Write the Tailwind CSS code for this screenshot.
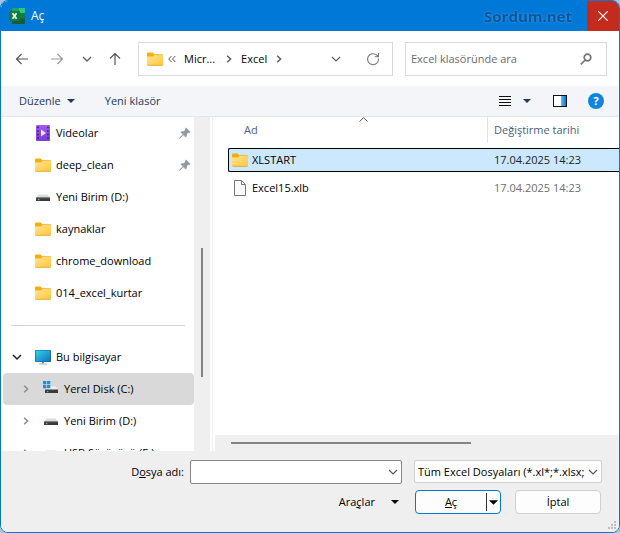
<!DOCTYPE html>
<html lang="tr">
<head>
    <meta charset="UTF-8">
    <meta name="viewport" content="width=device-width, initial-scale=1.0">
    <title>Aç</title>
    <script src="https://cdn.jsdelivr.net/npm/@tailwindcss/browser@4"></script>
</head>
<body class="bg-[#a9c6df] font-['Open_Sans','Noto_Sans',sans-serif] text-[11px] leading-4 text-black">

<!-- shared icons -->
<svg class="absolute size-0">
    <defs>
        <linearGradient id="folder-fill" x1="0" y1="0" x2="1" y2="1">
            <stop offset="0" stop-color="#ffe395"/>
            <stop offset="1" stop-color="#ffc83c"/>
        </linearGradient>
        <linearGradient id="video-fill" x1="0" y1="0" x2="0" y2="1">
            <stop offset="0" stop-color="#a35bea"/>
            <stop offset="1" stop-color="#7a3ad6"/>
        </linearGradient>
        <linearGradient id="screen-fill" x1="0" y1="0" x2="1" y2="1">
            <stop offset="0" stop-color="#35d5e0"/>
            <stop offset="1" stop-color="#1170c4"/>
        </linearGradient>
        <linearGradient id="pane-fill" x1="0" y1="0" x2="1" y2="0">
            <stop offset="0" stop-color="#5cc0f5"/>
            <stop offset="1" stop-color="#0b78d0"/>
        </linearGradient>
    </defs>
    <symbol id="icon-folder" viewBox="0 0 16 16">
        <path d="M0 2.5Q0 1.5 1 1.5H5.5L7.5 3.2H15Q16 3.2 16 4.2V8H0Z" fill="#f3b00d"/>
        <path d="M0 5.6H6L7.6 4H15Q16 4 16 5V13.2Q16 14.4 15 14.4H1Q0 14.4 0 13.2Z" fill="url(#folder-fill)"/>
        <path d="M.2 13.6Q.5 14.3 1.2 14.3H14.8Q15.5 14.3 15.8 13.6" fill="none" stroke="#e0a020" stroke-width=".8"/>
    </symbol>
    <symbol id="icon-drive" viewBox="0 0 16 16">
        <path d="M3.5 5.5H12.5L15 9H1Z" fill="#dcdcdc"/>
        <path d="M1 8.5H15V12H1Z" fill="#3b3b3d"/>
        <path d="M1 8.5H15V9.2H1Z" fill="#77777a"/>
        <rect x="3" y="10" width="1.4" height="1.2" fill="#3fe04b"/>
    </symbol>
    <symbol id="icon-pin" viewBox="0 0 12 12">
        <path d="M7 .8L11.2 5L10 5.7L9.3 5.4L7.6 7.1L7.5 9.2L6.6 10L4.4 7.8L1 11.2L.6 11.3L.7 10.9L4 7.4L2 5.4L2.8 4.5L4.9 4.4L6.6 2.7L6.3 2Z" fill="#8e9aa5" stroke="#8e9aa5" stroke-width=".6"/>
    </symbol>
    <symbol id="icon-right" viewBox="0 0 8 8">
        <path d="M2.2 .8L5.6 4L2.2 7.2" fill="none" stroke="currentColor" stroke-width="1.5"/>
    </symbol>
    <symbol id="icon-down" viewBox="0 0 10 10">
        <path d="M1 3L5 7L9 3" fill="none" stroke="currentColor" stroke-width="1.1"/>
    </symbol>
    <symbol id="icon-caret" viewBox="0 0 8 4">
        <path d="M0 0H8L4 4Z" fill="currentColor"/>
    </symbol>
</svg>

<div class="flex h-screen flex-col overflow-hidden rounded-lg border border-[#0078d4] bg-white">

    <!-- title bar -->
    <header class="flex h-[30px] shrink-0 items-center bg-[#0078d7] pl-2 text-white">
        <svg class="size-4" viewBox="0 0 16 16">
            <rect x="3" y="0" width="13" height="16" rx="1" fill="#185c37"/>
            <path d="M3 0H10V5H3Z" fill="#21a366"/>
            <path d="M10 0H16V5H10Z" fill="#33c481"/>
            <path d="M10 5H16V10.500H10Z" fill="#107c41"/>
            <rect x="0" y="3" width="11" height="10" rx="1" fill="#107c41"/>
            <path d="M3.500 5.300L7.500 10.700M7.500 5.300L3.500 10.700" stroke="#fff" stroke-width="1.700"/>
        </svg>
        <h1 class="ml-[6px] text-xs">Aç</h1>
        <span class="mr-[15px] ml-auto text-[15px] font-bold text-[#07569c] drop-shadow-[0_0_1px_#4aa3e8]">Sordum.net</span>
        <button class="flex h-[30px] w-8 items-center justify-center bg-[#c42b1c]" aria-label="Kapat">
            <svg class="size-[10px]" viewBox="0 0 10 10" fill="none" stroke="#fff" stroke-width="1.1">
                <path d="M0 0L10 10M10 0L0 10"/>
            </svg>
        </button>
    </header>

    <!-- navigation -->
    <div class="flex h-[55px] shrink-0 items-center pr-3 pl-[14px] text-[#5f5f5f]">
        <div class="flex items-center gap-[21px]">
            <button aria-label="Geri">
                <svg class="size-[14px]" viewBox="0 0 14 14" fill="none" stroke="#555" stroke-width="1.2">
                    <path d="M13 7H1.500M6.500 2L1.500 7L6.500 12"/>
                </svg>
            </button>
            <button aria-label="İleri">
                <svg class="size-[14px]" viewBox="0 0 14 14" fill="none" stroke="#999" stroke-width="1.2">
                    <path d="M1 7H12.500M7.500 2L12.500 7L7.500 12"/>
                </svg>
            </button>
        </div>
        <div class="ml-[18px] flex items-center gap-4">
            <button aria-label="Son konumlar">
                <svg class="size-[10px]" viewBox="0 0 10 10" fill="none" stroke="#666" stroke-width="1.4">
                    <path d="M1 3L5 7L9 3"/>
                </svg>
            </button>
            <button aria-label="Yukarı">
                <svg class="size-[14px]" viewBox="0 0 14 14" fill="none" stroke="#555" stroke-width="1.2">
                    <path d="M7 13V1.500M2 6.500L7 1.500L12 6.500"/>
                </svg>
            </button>
        </div>
        <div class="ml-4 flex h-[34px] min-w-0 flex-1 items-center border border-[#d9d9d9] pr-3 pl-2">
            <svg class="size-4"><use href="#icon-folder"/></svg>
            <svg class="ml-[5px] size-2" viewBox="0 0 8 8" fill="none" stroke="#555">
                <path d="M3.500 1L.7 4L3.500 7M7.300 1L4.500 4L7.300 7"/>
            </svg>
            <a href="#" class="ml-2 text-black">Micr...</a>
            <svg class="ml-[10px] size-2"><use href="#icon-right"/></svg>
            <a href="#" class="ml-2 text-black">Excel</a>
            <svg class="ml-2 size-2"><use href="#icon-right"/></svg>
            <button class="ml-auto" aria-label="Önceki konumlar">
                <svg class="size-[10px]"><use href="#icon-down"/></svg>
            </button>
            <button class="ml-[25px]" aria-label="Yenile">
                <svg class="size-[14px]" viewBox="0 0 14 14" fill="none" stroke="#777" stroke-width="1.1">
                    <path d="M12.500 6.500A5.500 5.500 0 1 1 10.800 3.200L12.300 4.600M12.500 1V4.800H8.700"/>
                </svg>
            </button>
        </div>
        <label class="ml-3 flex h-[34px] w-[202px] items-center border border-[#d9d9d9] pr-[14px] pl-[5px]">
            <input type="search" aria-label="Ara" placeholder="Excel klasöründe ara"
                   class="min-w-0 flex-1 placeholder:text-[#6b6b6b] focus:outline-none">
            <svg class="size-3" viewBox="0 0 12 12" fill="none" stroke="#777" stroke-width="1.700">
                <circle cx="7.500" cy="4.500" r="3.300"/>
                <path d="M5.200 7L.8 11.300"/>
            </svg>
        </label>
    </div>

    <!-- toolbar -->
    <div class="flex h-[31px] shrink-0 items-center border-b border-[#e5e5e5] bg-[#f3f5f8] pr-[15px] pl-[18px] text-[#1e395b]">
        <button class="flex items-center gap-[6px]">
            Düzenle
            <svg class="h-1 w-2"><use href="#icon-caret"/></svg>
        </button>
        <button class="ml-[30px]">Yeni klasör</button>
        <button class="ml-auto flex items-center gap-3" aria-label="Görünüm">
            <svg class="h-3 w-[12px]" viewBox="0 0 12 12" stroke="#111">
                <path d="M0 1.500H12M0 4.500H12M0 7.500H12M0 10.500H12"/>
            </svg>
            <svg class="h-1 w-2"><use href="#icon-caret"/></svg>
        </button>
        <button class="ml-[22px]" aria-label="Önizleme bölmesi">
            <svg class="h-3 w-[14px]" viewBox="0 0 14 12">
                <rect x=".5" y=".5" width="13" height="11" fill="#fff" stroke="#111"/>
                <rect x="8" y="1" width="5" height="10" fill="url(#pane-fill)"/>
            </svg>
        </button>
        <button class="ml-[21px] size-4 rounded-full bg-[#0f86dc] text-center font-bold text-white"
                aria-label="Yardım">?</button>
    </div>

    <!-- folder tree and file list -->
    <main class="flex min-h-0 flex-1 overflow-hidden">
        <nav class="w-[193px] shrink-0 overflow-hidden">
            <ul>
                <li class="flex h-8 items-center gap-[5px] pr-[3px] pl-[34px]">
                    <svg class="size-4" viewBox="0 0 16 16">
                        <rect x="1" y="0" width="14" height="16" rx="1" fill="url(#video-fill)"/>
                        <path d="M2.200 2.500H4M2.200 6H4M2.200 9.500H4M2.200 13H4M12 2.500H13.800M12 6H13.800M12 9.500H13.800M12 13H13.800" stroke="#40208a" stroke-width="1.700"/>
                        <path d="M6 4.500L11 8L6 11.500Z" fill="#f1e6ff"/>
                    </svg>
                    <a href="#">Videolar</a>
                    <svg class="ml-auto size-3"><use href="#icon-pin"/></svg>
                </li>
                <li class="flex h-8 items-center gap-[5px] pr-[3px] pl-[34px]">
                    <svg class="size-4"><use href="#icon-folder"/></svg>
                    <a href="#">deep_clean</a>
                    <svg class="ml-auto size-3"><use href="#icon-pin"/></svg>
                </li>
                <li class="flex h-8 items-center gap-[5px] pl-[34px]">
                    <svg class="size-4"><use href="#icon-drive"/></svg>
                    <a href="#">Yeni Birim (D:)</a>
                </li>
                <li class="flex h-8 items-center gap-[5px] pl-[34px]">
                    <svg class="size-4"><use href="#icon-folder"/></svg>
                    <a href="#">kaynaklar</a>
                </li>
                <li class="flex h-8 items-center gap-[5px] pl-[34px]">
                    <svg class="size-4"><use href="#icon-folder"/></svg>
                    <a href="#">chrome_download</a>
                </li>
                <li class="flex h-8 items-center gap-[5px] pl-[34px]">
                    <svg class="size-4"><use href="#icon-folder"/></svg>
                    <a href="#">014_excel_kurtar</a>
                </li>
            </ul>
            <div class="flex h-8 items-center pr-[9px] pl-[10px]">
                <hr class="w-full border-[#d4d4d4]">
            </div>
            <ul>
                <li class="flex h-8 items-center gap-[5px] pl-[11px]">
                    <svg class="mr-2 size-[10px]" viewBox="0 0 10 10" fill="none" stroke="#222" stroke-width="1.500">
                        <path d="M1 3L5 7L9 3"/>
                    </svg>
                    <svg class="size-4" viewBox="0 0 16 16">
                        <path d="M7 12H9V14.500H7Z" fill="#7e8b98"/>
                        <path d="M4 14.500H12V15.500H4Z" fill="#a5b0bb"/>
                        <rect x="0" y="1" width="16" height="12" rx="1" fill="#0e5fa5"/>
                        <rect x=".6" y="1.600" width="14.800" height="10.800" rx=".5" fill="url(#screen-fill)"/>
                    </svg>
                    <a href="#">Bu bilgisayar</a>
                </li>
                <li class="ml-[2px] flex h-8 items-center gap-[5px] rounded-sm bg-[#d9d9d9] pl-[19px]">
                    <svg class="mr-2 size-2 text-[#8a8a8a]"><use href="#icon-right"/></svg>
                    <svg class="size-4" viewBox="0 0 16 16">
                        <path d="M7 5.500H12.500L15 9H2Z" fill="#efefef"/>
                        <path d="M2 8.500H15V12H2Z" fill="#3b3b3d"/>
                        <rect x="4" y="10" width="1.400" height="1.200" fill="#3fe04b"/>
                        <path d="M0 0H3.300V3.300H0ZM4 0H7.300V3.300H4ZM0 4H3.300V7.300H0ZM4 4H7.300V7.300H4Z" fill="#1b8fdd"/>
                    </svg>
                    <a href="#">Yerel Disk (C:)</a>
                </li>
                <li class="flex h-8 items-center gap-[5px] pl-[21px]">
                    <svg class="mr-2 size-2 text-[#8a8a8a]"><use href="#icon-right"/></svg>
                    <svg class="size-4"><use href="#icon-drive"/></svg>
                    <a href="#">Yeni Birim (D:)</a>
                </li>
                <li class="flex h-8 items-center gap-[5px] pl-[21px]">
                    <svg class="mr-2 size-2 text-[#8a8a8a]"><use href="#icon-right"/></svg>
                    <svg class="size-4"><use href="#icon-drive"/></svg>
                    <a href="#">USB Sürücüsü (E:)</a>
                </li>
            </ul>
        </nav>
        <div class="flex w-4 shrink-0 flex-col items-center bg-[#efefef] pt-[131px]">
            <div class="h-[129px] w-[2px] bg-[#858585]"></div>
        </div>

        <section class="ml-[2px] flex min-w-0 flex-1 flex-col border-l border-[#f0f0f0]">
            <div class="flex-1 pl-[15px]">
                <table class="w-full table-fixed border-separate border-spacing-0 text-left">
                    <thead>
                    <tr class="h-[31px] align-top text-[#4c607a]">
                        <th class="relative w-[259px] p-0 font-normal">
                            <div class="flex h-[26px] items-center pl-4">Ad</div>
                            <svg class="absolute top-0 left-[131px] h-[5px] w-[9px]" viewBox="0 0 9 5" fill="none" stroke="#555">
                                <path d="M.5 4.500L4.500 .7L8.500 4.500"/>
                            </svg>
                        </th>
                        <th class="p-0 font-normal">
                            <div class="flex h-[26px] items-center border-l border-[#e2e2e2] pl-[6px]">Değiştirme tarihi</div>
                        </th>
                    </tr>
                    </thead>
                    <tbody>
                    <tr class="h-6 bg-[#cce8ff]">
                        <td class="rounded-l-xs border-y border-l border-black p-0">
                            <a href="#" class="flex items-center gap-1 pl-[3px]">
                                <svg class="size-4"><use href="#icon-folder"/></svg>
                                XLSTART
                            </a>
                        </td>
                        <td class="border-y border-black p-0 pl-[7px] text-[#222]">17.04.2025 14:23</td>
                    </tr>
                    <tr class="h-8">
                        <td class="p-0">
                            <a href="#" class="flex items-center gap-1 pl-1">
                                <svg class="size-4" viewBox="0 0 16 16">
                                    <path d="M2.500 .5H9.500L13.500 4.500V15.500H2.500Z" fill="#fafafa" stroke="#777"/>
                                    <path d="M9.500 .5V4.500H13.500" fill="none" stroke="#777"/>
                                </svg>
                                Excel15.xlb
                            </a>
                        </td>
                        <td class="p-0 pl-[7px] text-[#6d6d6d]">17.04.2025 14:23</td>
                    </tr>
                    </tbody>
                </table>
            </div>
            <div class="ml-[2px] flex h-4 items-center bg-[#efefef] pl-4">
                <div class="h-[2px] w-[240px] bg-[#858585]"></div>
            </div>
        </section>
    </main>

    <!-- file name, filter and buttons -->
    <footer class="relative flex h-[81px] shrink-0 flex-col gap-[6px] bg-[#efefef] pt-[9px] pr-[17px]">
        <div class="flex items-start justify-end">
            <label for="file-name" class="mt-1 mr-[6px]">D<u>o</u>sya adı:</label>
            <div class="flex h-6 w-[212px] items-center rounded-xs border border-[#868686] bg-white pr-[3px]">
                <input type="text" id="file-name" class="min-w-0 flex-1 px-1 focus:outline-none">
                <button aria-label="Dosya adlarını göster">
                    <svg class="size-[10px] text-[#555]"><use href="#icon-down"/></svg>
                </button>
            </div>
            <div class="relative ml-3 w-[188px]">
                <select aria-label="Dosya türü"
                        class="h-[23px] w-full appearance-none rounded-xs border border-[#d0d0d0] bg-[#fdfdfd] pr-[17px] pl-[3px]">
                    <option>Tüm Excel Dosyaları (*.xl*;*.xlsx;</option>
                </select>
                <svg class="pointer-events-none absolute top-[7px] right-1 size-[10px] text-[#555]"><use href="#icon-down"/></svg>
            </div>
        </div>
        <div class="flex items-center justify-end pr-px">
            <button class="flex items-center gap-4">
                <span>Ara<u>ç</u>lar</span>
                <svg class="h-1 w-2"><use href="#icon-caret"/></svg>
            </button>
            <div class="ml-4 flex h-6 w-[86px] items-center rounded-sm border border-[#0078d4] bg-[#fdfdfd]">
                <button class="flex-1"><u>A</u>ç</button>
                <button class="flex h-[18px] items-center border-l border-[#333] px-[2px]" aria-label="Açma seçenekleri">
                    <svg class="h-[5px] w-[9px]" viewBox="0 0 8 4"><path d="M0 0H8L4 4Z" fill="#000"/></svg>
                </button>
            </div>
            <button class="ml-[14px] h-6 w-[86px] rounded-sm border border-[#d0d0d0] bg-[#fdfdfd]">İptal</button>
        </div>
        <svg class="absolute right-[2px] bottom-[2px] size-[9px]" viewBox="0 0 9 9" fill="#bfbfbf">
            <path d="M6 0H8V2H6ZM3 3H5V5H3ZM6 3H8V5H6ZM0 6H2V8H0ZM3 6H5V8H3ZM6 6H8V8H6Z"/>
        </svg>
    </footer>
</div>

</body>
</html>
